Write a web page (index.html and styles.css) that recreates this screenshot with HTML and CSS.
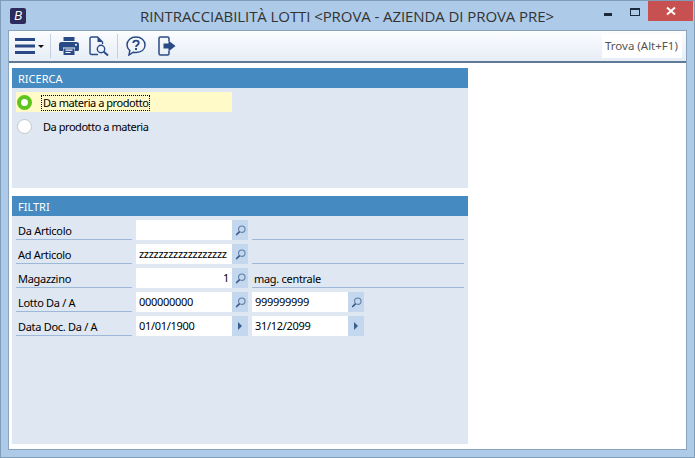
FILE: index.html
```html
<!DOCTYPE html>
<html lang="en">
<head>
    <meta charset="UTF-8">
    <title>Rintracciabilità lotti</title>
    <link rel="stylesheet" href="styles.css">
</head>
<body>
    <div class="window">
        <!-- Title bar -->
        <div class="titlebar">
            <div class="app-logo"><span>B</span></div>
            <div class="title">RINTRACCIABILITÀ LOTTI &lt;PROVA - AZIENDA DI PROVA PRE&gt;</div>
            <div class="win-controls">
                <div class="win-min"></div>
                <div class="win-max"></div>
                <div class="win-close">
                    <svg width="10" height="10" viewBox="0 0 10 10"><path d="M1 1.5 L9 8.5 M9 1.5 L1 8.5" stroke="#fff" stroke-width="2"/></svg>
                </div>
            </div>
        </div>

        <div class="client">
            <!-- Toolbar -->
            <div class="toolbar">
                <svg class="tool-menu" width="20" height="16" viewBox="0 0 20 16"><path d="M0 1.5 H20 M0 8 H20 M0 14.5 H20" stroke="#2a4a86" stroke-width="3"/></svg>
                <div class="caret"></div>
                <div class="sep sep-first"></div>
                <svg class="tool" width="20" height="20" viewBox="0 0 20 20">
                    <path d="M4.5 5 V1 H15.5 V5 Z" fill="#2a4a86"/>
                    <path d="M2.5 6 H17.5 Q20 6 20 8.5 V14 Q20 15 18.5 15 H16 V11.5 H4 V15 H1.5 Q0 15 0 14 V8.5 Q0 6 2.5 6 Z" fill="#2a4a86"/>
                    <path d="M4.5 12.5 H15.5 V19 H4.5 Z" fill="#2a4a86"/>
                    <path d="M6.5 14.2 H13.5 M6.5 16.5 H11.5" stroke="#fff" stroke-width="1.2"/>
                    <circle cx="17" cy="8.7" r="1" fill="#fff"/>
                </svg>
                <svg class="tool tool-preview" width="20" height="20" viewBox="0 0 20 20" fill="none">
                    <path d="M9 18.5 H2.5 Q1 18.5 1 17 V2.5 Q1 1 2.5 1 H8.5 L13.5 6 V8" stroke="#2a4a86" stroke-width="1.4"/>
                    <path d="M8.5 1 V6 H13.5 Z" fill="#2a4a86"/>
                    <circle cx="12" cy="13" r="3.7" stroke="#2a4a86" stroke-width="1.4"/>
                    <path d="M14.8 15.8 L19 19.5" stroke="#2a4a86" stroke-width="2"/>
                </svg>
                <div class="sep sep-second"></div>
                <svg class="tool" width="20" height="20" viewBox="0 0 20 20" fill="none">
                    <path d="M10 1 C15.2 1 19 4.3 19 9 C19 13.7 15.2 16.5 10 16.5 C9 16.5 8 16.4 7.2 16.2 L3 19 L3.8 14.6 C2 13 1 11.2 1 9 C1 4.3 4.8 1 10 1 Z" stroke="#2a4a86" stroke-width="1.5"/>
                    <path d="M7.3 7 C7.3 3.8 12.8 3.8 12.8 7 C12.8 9 10 9 10 11" stroke="#2a4a86" stroke-width="1.8"/>
                    <rect x="9" y="12" width="2" height="2" fill="#2a4a86"/>
                </svg>
                <svg class="tool tool-exit" width="18" height="20" viewBox="0 0 18 20" fill="none">
                    <path d="M11 5 V2.5 Q11 1 9.5 1 H2.5 Q1 1 1 2.5 V17.5 Q1 19 2.5 19 H9.5 Q11 19 11 17.5 V15" stroke="#2a4a86" stroke-width="1.5"/>
                    <path d="M5.5 7.5 H10.5 V4.5 L17.5 10 L10.5 15.5 V12.5 H5.5 Z" fill="#2a4a86"/>
                </svg>
                <div class="search">Trova (Alt+F1)</div>
            </div>

            <div class="content">
                <!-- Ricerca -->
                <div class="panel panel-ricerca">
                    <div class="panel-head">RICERCA</div>
                    <div class="radio-list">
                        <div class="radio-row selected">
                            <div class="radio on"></div>
                            <span class="radio-text focused">Da materia a prodotto</span>
                        </div>
                        <div class="radio-row">
                            <div class="radio"></div>
                            <span class="radio-text">Da prodotto a materia</span>
                        </div>
                    </div>
                </div>

                <!-- Filtri -->
                <div class="panel panel-filtri">
                    <div class="panel-head">FILTRI</div>
                    <div class="filter-grid">
                        <div class="label">Da Articolo</div>
                        <div class="field"></div>
                        <div class="btn"><svg class="lens" width="11" height="11" viewBox="0 0 11 11"><use href="#lens"/></svg></div>
                        <div class="desc"></div>

                        <div class="label">Ad Articolo</div>
                        <div class="field">zzzzzzzzzzzzzzzzzz</div>
                        <div class="btn"><svg class="lens" width="11" height="11" viewBox="0 0 11 11"><use href="#lens"/></svg></div>
                        <div class="desc"></div>

                        <div class="label">Magazzino</div>
                        <div class="field num">1</div>
                        <div class="btn"><svg class="lens" width="11" height="11" viewBox="0 0 11 11"><use href="#lens"/></svg></div>
                        <div class="desc">mag. centrale</div>

                        <div class="label">Lotto Da / A</div>
                        <div class="field">000000000</div>
                        <div class="btn"><svg class="lens" width="11" height="11" viewBox="0 0 11 11"><use href="#lens"/></svg></div>
                        <div class="field">999999999</div>
                        <div class="btn"><svg class="lens" width="11" height="11" viewBox="0 0 11 11"><use href="#lens"/></svg></div>

                        <div class="label">Data Doc. Da / A</div>
                        <div class="field">01/01/1900</div>
                        <div class="btn"><div class="arrow"></div></div>
                        <div class="field">31/12/2099</div>
                        <div class="btn"><div class="arrow"></div></div>
                    </div>
                </div>
            </div>
        </div>
    </div>

    <svg width="0" height="0" class="defs">
        <defs>
            <g id="lens" fill="none">
                <circle cx="6.8" cy="4.2" r="3.2" stroke="#5f7fa6" stroke-width="1.1"/>
                <path d="M4.6 6.6 L1.2 10" stroke="#34557f" stroke-width="1.5"/>
            </g>
        </defs>
    </svg>
</body>
</html>
```

FILE: styles.css
```css
* {
    box-sizing: border-box;
}
html, body {
    margin: 0;
    padding: 0;
}
body {
    width: 695px;
    height: 458px;
    overflow: hidden;
    font-family: "Noto Sans", Tahoma, sans-serif;
    font-size: 11px;
    letter-spacing: -0.3px;
    color: #000;
}
.defs {
    display: block;
    height: 0;
}
.window {
    width: 695px;
    height: 458px;
    display: flex;
    flex-direction: column;
    background: #adcae8;
    border: 1px solid #7f9db9;
    padding: 0 7px 7px 7px;
}
.titlebar {
    height: 29px;
    flex: none;
    display: flex;
    align-items: flex-start;
    position: relative;
}
.app-logo {
    width: 16px;
    height: 16px;
    margin: 7px 0 0 2px;
    background: #2d2a5c;
    border-radius: 2px;
    display: flex;
    align-items: center;
    justify-content: center;
}
.app-logo span {
    color: #fff;
    font: italic 12px "Liberation Sans", sans-serif;
}
.title {
    position: absolute;
    left: -1px;
    right: 0;
    top: 4px;
    text-align: center;
    font-family: "Open Sans", sans-serif;
    font-size: 15px;
    letter-spacing: -0.08px;
    line-height: 22px;
    color: #333;
}
.win-controls {
    margin-left: auto;
    position: relative;
    display: flex;
    align-items: flex-start;
    margin-right: -6px;
}
.win-min {
    width: 8px;
    height: 3px;
    margin: 12px 18px 0 0;
    background: #1b2a3c;
}
.win-max {
    width: 10px;
    height: 8px;
    margin: 7px 8px 0 0;
    border: 1px solid #1b2a3c;
    border-top-width: 2px;
}
.win-close {
    width: 45px;
    height: 20px;
    background: #c75050;
    display: flex;
    align-items: center;
    justify-content: center;
}
.client {
    flex: 1;
    display: flex;
    flex-direction: column;
    background: #fff;
    border: 1px solid #8aa4bf;
    min-height: 0;
}
.toolbar {
    height: 32px;
    flex: none;
    display: flex;
    align-items: center;
    padding: 0 4px 0 6px;
    background: linear-gradient(to bottom, #fbfcfe, #e6edf6);
    border-bottom: 2px solid #5f7a96;
}
.tool-menu {
    flex: none;
}
.caret {
    width: 0;
    height: 0;
    margin-left: 3px;
    border-left: 3px solid transparent;
    border-right: 3px solid transparent;
    border-top: 3px solid #111;
}
.sep {
    width: 1px;
    height: 24px;
    background: #c4d0de;
}
.sep-first {
    margin: 0 8px 0 6px;
}
.sep-second {
    margin: 0 8px;
}
.tool-preview {
    margin-left: 10px;
}
.tool-exit {
    margin-left: 12px;
}
.search {
    margin-left: auto;
    width: 80px;
    height: 24px;
    background: #fff;
    color: #555;
    font-size: 11.5px;
    letter-spacing: 0;
    line-height: 24px;
    padding-left: 3px;
    white-space: nowrap;
}
.content {
    flex: 1;
    padding: 5px 0 0 3px;
    min-height: 0;
}
.panel {
    width: 456px;
    background: #dfe7f2;
}
.panel-ricerca {
    height: 120px;
    margin-bottom: 8px;
}
.panel-filtri {
    height: 248px;
}
.panel-head {
    height: 20px;
    line-height: 21px;
    background: #468ac2;
    color: #fff;
    letter-spacing: 0;
    padding-left: 6px;
}
.radio-list {
    padding: 4px 0 0 4px;
    display: flex;
    flex-direction: column;
    gap: 4px;
}
.radio-row {
    width: 216px;
    height: 20px;
    display: flex;
    align-items: center;
    padding-left: 1px;
}
.radio-row.selected {
    background: #fffac8;
}
.radio {
    width: 15px;
    height: 15px;
    border-radius: 50%;
    background: #fff;
    border: 1px solid #c4c8cc;
}
.radio.on {
    border: 4px solid #5fc41c;
}
.radio-text {
    margin-left: 9px;
    padding: 0 1px;
    line-height: 14px;
    letter-spacing: -0.45px;
    border: 1px dotted transparent;
    position: relative;
    top: 1px;
}
.radio-text.focused {
    border-color: #000;
}
.filter-grid {
    display: grid;
    grid-template-columns: 120px 96px 16px 4px 96px 16px;
    grid-auto-rows: 20px;
    row-gap: 4px;
    padding: 4px 0 0 4px;
}
.label {
    grid-column: 1;
    width: 116px;
    padding-left: 2px;
    line-height: 22px;
    border-bottom: 1px solid #9db8d8;
    white-space: nowrap;
}
.field {
    background: #fff;
    line-height: 19px;
    padding: 0 2px 0 3px;
    white-space: nowrap;
    overflow: hidden;
}
.num {
    text-align: right;
    padding-right: 3px;
}
.btn {
    background: #c3d7ef;
    display: flex;
    align-items: center;
    justify-content: center;
}
.btn + .field {
    grid-column: 5;
}
.desc {
    grid-column: 5 / span 3;
    width: 212px;
    padding-left: 2px;
    line-height: 22px;
    border-bottom: 1px solid #9db8d8;
}
.arrow {
    width: 0;
    height: 0;
    border-top: 4px solid transparent;
    border-bottom: 4px solid transparent;
    border-left: 4px solid #3b5f8f;
}
```
